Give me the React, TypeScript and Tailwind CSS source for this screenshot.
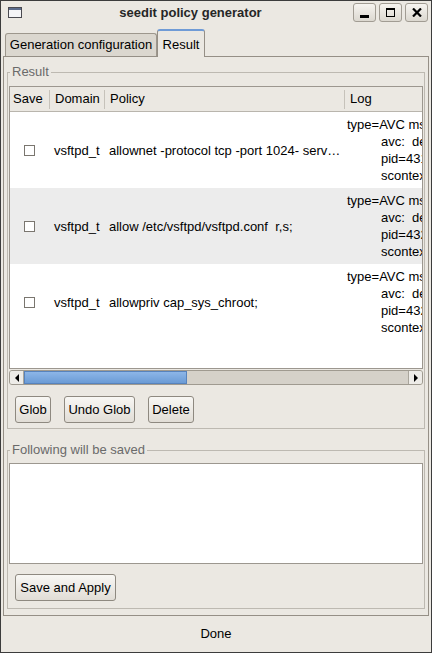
import React from "react";

type Row = { policy: string; log: string[]; alt: boolean };

const rows: Row[] = [
  {
    policy: "allownet -protocol tcp -port 1024- serv…",
    log: [
      "type=AVC msg=audit(1184056810.321:91):",
      "avc:  denied  { name_bind } for",
      "pid=4315 comm=\"vsftpd\" src=1024",
      "scontext=system_u:system_r:vsftpd_t",
    ],
    alt: false,
  },
  {
    policy: "allow /etc/vsftpd/vsftpd.conf  r,s;",
    log: [
      "type=AVC msg=audit(1184056812.551:92):",
      "avc:  denied  { read } for",
      "pid=4323 comm=\"vsftpd\" name=\"vsftpd.conf\"",
      "scontext=system_u:system_r:vsftpd_t",
    ],
    alt: true,
  },
  {
    policy: "allowpriv cap_sys_chroot;",
    log: [
      "type=AVC msg=audit(1184056813.104:93):",
      "avc:  denied  { sys_chroot } for",
      "pid=4322 comm=\"vsftpd\" capability=18",
      "scontext=system_u:system_r:vsftpd_t",
    ],
    alt: false,
  },
];

function Btn({ w, children }: { w: string; children: React.ReactNode }) {
  return (
    <div
      className={`${w} h-[27px] flex items-center justify-center rounded-[3px] border border-[#8e8980] bg-linear-to-b from-[#f8f7f4] to-[#e1ddd6] text-[13px] leading-none text-black`}
    >
      {children}
    </div>
  );
}

function TitleBtn({ children }: { children: React.ReactNode }) {
  return (
    <div className="w-[23px] h-[19px] flex items-center justify-center rounded-[3px] border border-[#a19c93] bg-linear-to-b from-[#f6f4f0] to-[#dcd8d0]">
      {children}
    </div>
  );
}

function Sep() {
  return <div className="w-px h-[19px] bg-[#c6c2ba] shrink-0" />;
}

export default function App() {
  return (
    <div className="w-[432px] h-[653px] flex flex-col overflow-hidden border border-[#3c3c3c] bg-[#ebe8e2] text-black [font-family:'Liberation_Sans',Arial,sans-serif]">
      {/* Title bar */}
      <div className="h-[23px] flex items-center shrink-0">
        <div className="ml-[7px] w-[14px] h-[11px]">
          <svg width="14" height="11" viewBox="0 0 14 11">
            <rect x="0.5" y="0.5" width="13" height="10" fill="#f4f4f6" stroke="#4a4a50" />
            <rect x="1" y="1" width="12" height="2" fill="#5b6c8c" />
          </svg>
        </div>
        <div className="flex-1 pl-[6px] text-center text-[13px] font-bold text-[#262626]">
          seedit policy generator
        </div>
        <div className="flex gap-[3px] mr-[3px]">
          <TitleBtn>
            <div className="mt-[7px] w-[9px] h-[3px] bg-black" />
          </TitleBtn>
          <TitleBtn>
            <div className="w-[9px] h-[9px] border border-black border-t-[2px]" />
          </TitleBtn>
          <TitleBtn>
            <svg width="10" height="9" viewBox="0 0 10 9">
              <path d="M1 0.5 L9 8.5 M9 0.5 L1 8.5" stroke="#000" strokeWidth="2.2" />
            </svg>
          </TitleBtn>
        </div>
      </div>

      {/* Notebook */}
      <div className="mx-[2px] pt-[5px] flex flex-col min-w-0">
        <div className="flex items-end pl-[2px] h-[27px]">
          <div className="w-[152px] h-[23px] flex items-center justify-center rounded-t-[3px] border border-b-0 border-[#9d978d] bg-[#dbd7cf] text-[13px]">
            Generation configuration
          </div>
          <div className="relative z-10 -mb-px w-[48px] h-[28px] flex items-center justify-center pt-[2px] rounded-t-[3px] border-x border-t-[2px] border-x-[#958f86] border-t-[#6f9bd6] bg-[#ebe8e2] text-[13px]">
            Result
          </div>
        </div>

        <div className="w-[426px] h-[560px] border border-[#958f86] px-[3px] pt-[8px] pb-[6px] flex flex-col">
          {/* Result frame */}
          <fieldset className="min-w-0 w-[418px] border border-[#bdb9b1] px-[1px] pt-[7px] pb-[5px]">
            <legend className="ml-[1px] px-[2px] text-[13px] leading-[14px] text-[#6a6a6a]">Result</legend>
            <div className="w-[414px] h-[283px] border border-[#9c978f] overflow-hidden flex flex-col">
              <div className="h-[25px] flex items-center border-b border-[#b9b5ad] bg-[#ebe8e2] text-[13px] shrink-0">
                <div className="w-[39px] shrink-0 pl-[3px]">Save</div>
                <Sep />
                <div className="w-[54px] shrink-0 pl-[5px]">Domain</div>
                <Sep />
                <div className="w-[239px] shrink-0 pl-[5px]">Policy</div>
                <Sep />
                <div className="pl-[5px]">Log</div>
              </div>
              <div className="flex-1 bg-white">
                {rows.map((r, i) => (
                  <div
                    key={i}
                    className={`h-[76px] flex items-center text-[13px] leading-[17px] ${r.alt ? "bg-[#ececec]" : "bg-white"}`}
                  >
                    <div className="w-[39px] shrink-0 flex justify-center">
                      <div className="w-[11px] h-[11px] border border-[#7a766f] bg-white" />
                    </div>
                    <div className="w-[55px] shrink-0 pl-[5px]">vsftpd_t</div>
                    <div className="w-[240px] shrink-0 pl-[5px] whitespace-pre overflow-hidden">{r.policy}</div>
                    <div className="flex-1 min-w-0 pl-[3px] whitespace-pre overflow-hidden">
                      <div>{r.log[0]}</div>
                      <div className="pl-[34px]">{r.log[1]}</div>
                      <div className="pl-[34px]">{r.log[2]}</div>
                      <div className="pl-[34px]">{r.log[3]}</div>
                    </div>
                  </div>
                ))}
              </div>
            </div>
            {/* Horizontal scrollbar */}
            <div className="w-[414px] mt-[1px] h-[15px] flex rounded-[3px] border border-[#9f9a90] bg-[#d5d1c9] overflow-hidden">
              <div className="w-[14px] shrink-0 flex items-center justify-center bg-[#eeece8] border-r border-[#a9a59c]">
                <div className="w-0 h-0 border-y-[4px] border-y-transparent border-r-[4px] border-r-black" />
              </div>
              <div className="w-[163px] shrink-0 bg-linear-to-b from-[#8db6e7] to-[#6b9bd6] border border-[#5783bd]" />
              <div className="flex-1" />
              <div className="w-[14px] shrink-0 flex items-center justify-center bg-[#eeece8] border-l border-[#a9a59c]">
                <div className="w-0 h-0 border-y-[4px] border-y-transparent border-l-[4px] border-l-black" />
              </div>
            </div>
            <div className="mt-[11px] flex gap-[13px] pl-[6px]">
              <Btn w="w-[36px]">Glob</Btn>
              <Btn w="w-[71px]">Undo Glob</Btn>
              <Btn w="w-[46px]">Delete</Btn>
            </div>
          </fieldset>

          {/* Following will be saved frame */}
          <fieldset className="min-w-0 w-[418px] mt-[14px] border border-[#bdb9b1] px-[1px] pt-[6px] pb-[7px]">
            <legend className="ml-[1px] px-[2px] text-[13px] leading-[14px] text-[#6a6a6a]">Following will be saved</legend>
            <div className="w-[414px] h-[101px] border border-[#9c978f] bg-white" />
            <div className="mt-[10px] pl-[6px] flex">
              <Btn w="w-[101px]">Save and Apply</Btn>
            </div>
          </fieldset>
        </div>
      </div>

      {/* Status bar */}
      <div className="h-[36px] flex items-center justify-center text-[13px]">Done</div>
    </div>
  );
}
